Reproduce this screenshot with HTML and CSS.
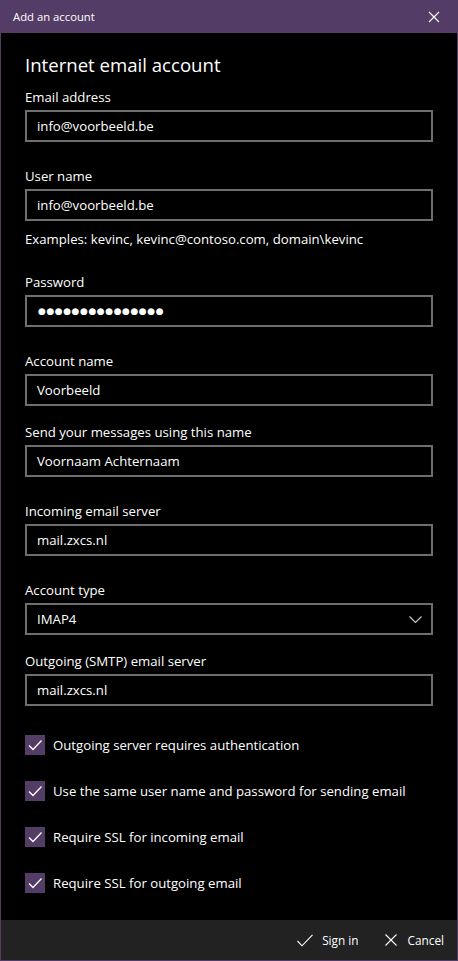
FILE: index.html
```html
<!DOCTYPE html>
<html lang="en">
<head>
<meta charset="utf-8">
<title>Add an account</title>
<link rel="stylesheet" href="styles.css">
</head>
<body>
<div class="window">
  <header class="titlebar">
    <span class="title">Add an account</span>
    <svg class="close" width="12" height="12" viewBox="0 0 12 12"><path d="M1 1L11 11M11 1L1 11" stroke="#fff" stroke-width="1.2" fill="none"/></svg>
  </header>
  <main class="content">
    <h1 class="heading">Internet email account</h1>

    <label class="label">Email address</label>
    <div class="field">info@voorbeeld.be</div>

    <label class="label gap-l">User name</label>
    <div class="field">info@voorbeeld.be</div>
    <p class="hint">Examples: kevinc, kevinc@contoso.com, domain\kevinc</p>

    <label class="label gap-m">Password</label>
    <div class="field password">●●●●●●●●●●●●●●●</div>

    <label class="label gap-l">Account name</label>
    <div class="field">Voorbeeld</div>

    <label class="label gap-s">Send your messages using this name</label>
    <div class="field">Voornaam Achternaam</div>

    <label class="label gap-l">Incoming email server</label>
    <div class="field">mail.zxcs.nl</div>

    <label class="label gap-l">Account type</label>
    <div class="field select">
      <span>IMAP4</span>
      <svg class="chevron" width="13" height="7" viewBox="0 0 13 7"><path d="M0.5 0.5L6.5 6.5L12.5 0.5" stroke="#d0d0d0" stroke-width="1.1" fill="none"/></svg>
    </div>

    <label class="label gap-s">Outgoing (SMTP) email server</label>
    <div class="field">mail.zxcs.nl</div>

    <ul class="checks">
      <li class="check"><span class="box"><svg width="20" height="20" viewBox="0 0 20 20"><path d="M4 10.5L8 14.5L16.5 5.5" stroke="#fff" stroke-width="1.3" fill="none"/></svg></span>Outgoing server requires authentication</li>
      <li class="check"><span class="box"><svg width="20" height="20" viewBox="0 0 20 20"><path d="M4 10.5L8 14.5L16.5 5.5" stroke="#fff" stroke-width="1.3" fill="none"/></svg></span>Use the same user name and password for sending email</li>
      <li class="check"><span class="box"><svg width="20" height="20" viewBox="0 0 20 20"><path d="M4 10.5L8 14.5L16.5 5.5" stroke="#fff" stroke-width="1.3" fill="none"/></svg></span>Require SSL for incoming email</li>
      <li class="check"><span class="box"><svg width="20" height="20" viewBox="0 0 20 20"><path d="M4 10.5L8 14.5L16.5 5.5" stroke="#fff" stroke-width="1.3" fill="none"/></svg></span>Require SSL for outgoing email</li>
    </ul>
  </main>
  <footer class="footer">
    <button class="action"><svg width="16" height="13" viewBox="0 0 16 13"><path d="M0.5 7L5 11.8L15.5 0.8" stroke="#fff" stroke-width="1.1" fill="none"/></svg>Sign in</button>
    <button class="action"><svg width="12" height="12" viewBox="0 0 12 12"><path d="M0.5 0.5L11.5 11.5M11.5 0.5L0.5 11.5" stroke="#fff" stroke-width="1.1" fill="none"/></svg>Cancel</button>
  </footer>
</div>
</body>
</html>
```

FILE: styles.css
```css
* { box-sizing: border-box; }
html, body { margin: 0; padding: 0; background: #000; }
body {
  font-family: "Open Sans", "Noto Sans", sans-serif;
  color: #fff;
  width: 458px;
  height: 961px;
  overflow: hidden;
}
.window {
  width: 458px;
  height: 961px;
  display: flex;
  flex-direction: column;
  border: 1px solid #533c66;
  border-top: 0;
  background: #000;
}
.titlebar {
  height: 33px;
  flex: none;
  background: #533c66;
  margin: 0 -1px;
  display: flex;
  align-items: center;
  justify-content: space-between;
  padding: 0 18px 0 13px;
}
.title { font-size: 11.3px; line-height: 16px; }
.close { display: block; }
.content {
  flex: 1;
  padding: 18px 24px 0 24px;
  display: flex;
  flex-direction: column;
}
.heading {
  margin: 0;
  font-weight: 400;
  font-size: 18.6px;
  line-height: 28px;
  margin-bottom: 8px;
}
.label {
  display: block;
  font-size: 13.2px;
  line-height: 20px;
  margin-bottom: 3px;
}
.gap-l { margin-top: 24px; }
.gap-m { margin-top: 23px; }
.gap-s { margin-top: 16px; }
.field {
  height: 32px;
  border: 2px solid #6e6e6e;
  padding: 0 10px;
  font-size: 13.2px;
  line-height: 28px;
  display: flex;
  align-items: center;
}
.password {
  font-family: "DejaVu Sans", sans-serif;
  font-size: 9px;
  letter-spacing: 0.55px;
  padding-left: 11px;
}
.select { justify-content: space-between; padding-right: 9px; }
.chevron { display: block; }
.hint {
  margin: 8px 0 0;
  font-size: 13.2px;
  line-height: 20px;
}
.checks {
  list-style: none;
  margin: 29px 0 0;
  padding: 0;
  display: flex;
  flex-direction: column;
  gap: 26px;
}
.check {
  display: flex;
  align-items: center;
  gap: 8px;
  font-size: 13.2px;
  line-height: 20px;
}
.box {
  width: 20px;
  height: 20px;
  background: #533c66;
  flex: none;
}
.box svg { display: block; }
.footer {
  height: 40px;
  flex: none;
  background: #222;
  display: flex;
  justify-content: flex-end;
  align-items: center;
  padding-right: 13px;
  gap: 26px;
}
.action {
  background: none;
  border: 0;
  padding: 0;
  color: #fff;
  font-family: inherit;
  font-size: 11.8px;
  display: flex;
  align-items: center;
  gap: 9px;
}
.action + .action { gap: 11px; }
.action svg { display: block; }
```
